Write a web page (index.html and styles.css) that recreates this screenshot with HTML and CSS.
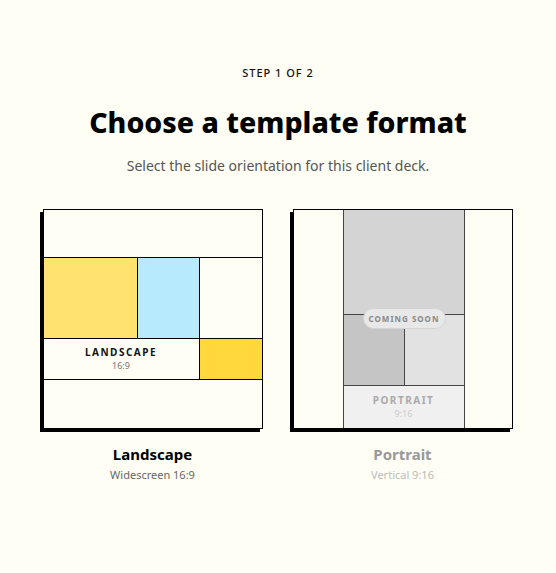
FILE: index.html
```html
<!DOCTYPE html>
<html lang="en">
<head>
<meta charset="utf-8">
<title>Choose a template format</title>
<link rel="stylesheet" href="styles.css">
</head>
<body>
<main class="page">
  <p class="step">STEP 1 OF 2</p>
  <h1 class="title">Choose a template format</h1>
  <p class="subtitle">Select the slide orientation for this client deck.</p>
  <div class="options">
    <div class="option">
      <div class="card landscape">
        <div class="cell span3"></div>
        <div class="cell yellow"></div>
        <div class="cell blue"></div>
        <div class="cell"></div>
        <div class="cell label span2">
          <span class="label-name">LANDSCAPE</span>
          <span class="label-ratio">16:9</span>
        </div>
        <div class="cell gold"></div>
        <div class="cell span3"></div>
      </div>
      <div class="option-name">Landscape</div>
      <div class="option-desc">Widescreen 16:9</div>
    </div>
    <div class="option disabled">
      <div class="card portrait">
        <div class="pcell"></div>
        <div class="pcol">
          <div class="pcell gray-a span2"></div>
          <div class="pcell gray-b"></div>
          <div class="pcell gray-c"></div>
          <div class="pcell plabel span2">
            <span class="label-name">PORTRAIT</span>
            <span class="label-ratio">9:16</span>
          </div>
        </div>
        <div class="pcell"></div>
        <span class="badge">COMING SOON</span>
      </div>
      <div class="option-name">Portrait</div>
      <div class="option-desc">Vertical 9:16</div>
    </div>
  </div>
</main>
</body>
</html>
```

FILE: styles.css
```css
html, body {
  margin: 0;
  padding: 0;
  background: #fffef5;
}
body {
  font-family: "Noto Sans", "DejaVu Sans", sans-serif;
  color: #111;
}
.page {
  display: flex;
  flex-direction: column;
  align-items: center;
  padding-top: 65px;
}
.step {
  margin: 0;
  font-size: 11px;
  line-height: 16px;
  font-weight: 500;
  letter-spacing: 1px;
  color: #111;
}
.title {
  margin: 21px 0 0;
  font-size: 28.5px;
  line-height: 40px;
  font-weight: 800;
  color: #000;
  letter-spacing: 0;
}
.subtitle {
  margin: 14px 0 0;
  font-size: 14px;
  line-height: 20px;
  color: #555;
}
.options {
  display: flex;
  gap: 30px;
  margin-top: 33px;
  padding-right: 1px;
}
.option {
  display: flex;
  flex-direction: column;
  align-items: center;
}
.card {
  width: 220px;
  height: 220px;
  box-sizing: border-box;
  border: 1px solid #000;
  box-shadow: -3px 3px 0 #000;
  display: grid;
  gap: 1px;
  position: relative;
}
.landscape {
  background: #000;
  grid-template-columns: 93px 61px 62px;
  grid-template-rows: 47px 80px 40px 48px;
}
.cell {
  background: #fffef5;
}
.span3 { grid-column: span 3; }
.span2 { grid-column: span 2; }
.yellow { background: #ffe270; }
.blue { background: #b8eafd; }
.gold { background: #ffd83e; }
.label {
  display: flex;
  flex-direction: column;
  align-items: center;
  justify-content: center;
  padding-bottom: 1px;
}
.label-name {
  font-size: 10px;
  line-height: 13px;
  font-weight: 700;
  letter-spacing: 1.5px;
  color: #111;
}
.label-ratio {
  font-size: 9px;
  line-height: 12px;
  color: #777;
  margin-top: 1px;
}
.portrait {
  background: #444;
  grid-template-columns: 49px 120px 47px;
}
.pcell {
  background: #fffef5;
}
.pcol {
  display: grid;
  gap: 1px;
  grid-template-columns: 60px 59px;
  grid-template-rows: 104px 70px 42px;
}
.gray-a { background: #d4d4d4; }
.gray-b { background: #c5c5c5; }
.gray-c { background: #e2e2e2; }
.plabel {
  background: #f0f0f0;
  display: flex;
  flex-direction: column;
  align-items: center;
  justify-content: center;
}
.plabel .label-name { color: #aaa; }
.plabel .label-ratio { color: #ccc; }
.badge {
  position: absolute;
  left: 69px;
  top: 98px;
  width: 83px;
  height: 21px;
  box-sizing: border-box;
  border: 1px solid #d4d4d4;
  border-radius: 11px;
  background: #e8e8e8;
  color: #888;
  font-size: 8px;
  font-weight: 700;
  letter-spacing: 1px;
  display: flex;
  align-items: center;
  justify-content: center;
}
.option-name {
  margin-top: 15px;
  font-size: 15px;
  line-height: 20px;
  font-weight: 700;
  color: #000;
}
.option-desc {
  margin-top: 3px;
  font-size: 11px;
  line-height: 15px;
  color: #666;
}
.disabled .option-name { color: #999; }
.disabled .option-desc { color: #bbb; }
```
